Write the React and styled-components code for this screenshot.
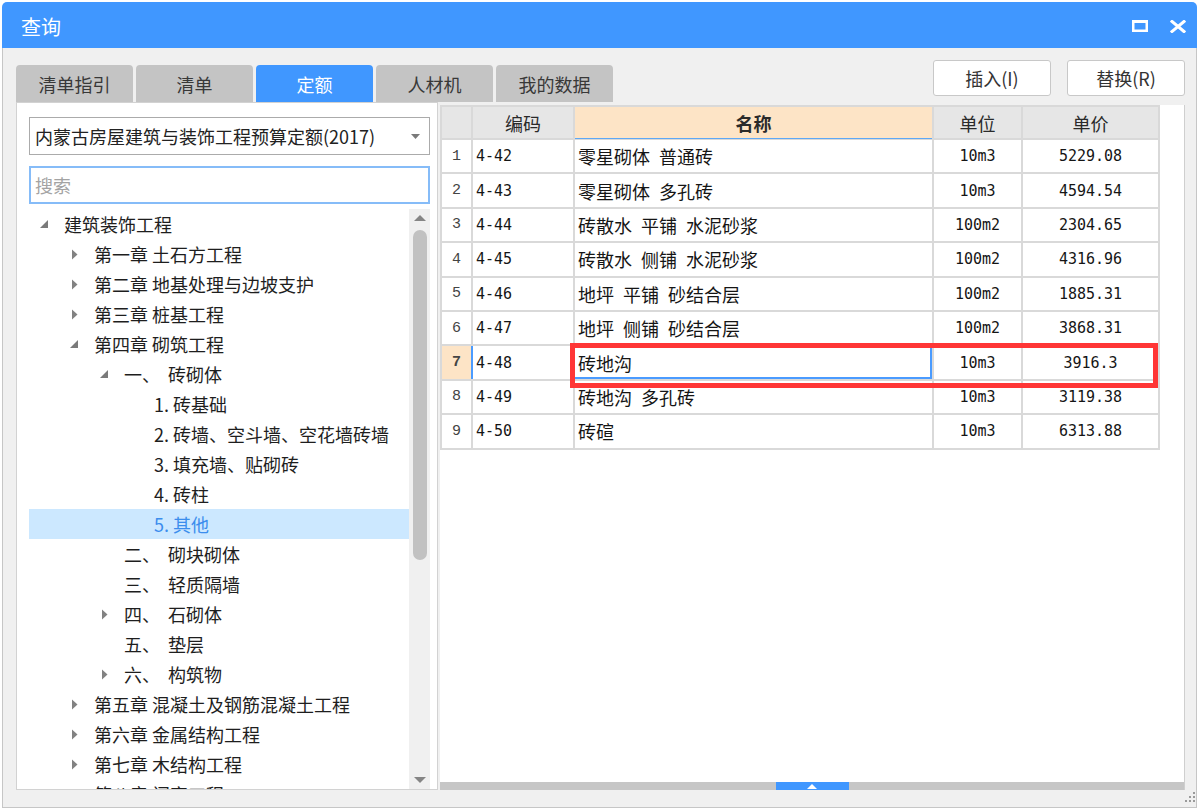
import React from 'react';
import styled, { createGlobalStyle } from 'styled-components';

const GlobalStyle = createGlobalStyle`
  html, body { margin: 0; padding: 0; background: #ffffff; }
  body { font-family: "Noto Sans CJK SC", "Noto Sans", sans-serif; }
  * { box-sizing: border-box; }
`;

const Window = styled.div`
  margin: 2px 0 0 2px;
  width: 1195px;
  height: 806px;
  display: flex;
  flex-direction: column;
  border-radius: 5px 5px 0 0;
  overflow: hidden;
  position: relative;
`;

const TitleBar = styled.div`
  height: 46px;
  flex: none;
  background: #4097ff;
  display: flex;
  align-items: center;
  justify-content: space-between;
  padding: 2px 11px 0 19px;
  color: #ffffff;
  font-size: 20px;
`;

const Controls = styled.div`
  display: flex;
  align-items: center;
  gap: 22px;
`;

const Body = styled.div`
  flex: 1;
  display: flex;
  flex-direction: column;
  background: #f0f0f0;
  border: 1px solid #c6c6c6;
  border-top: none;
  padding: 0 11px 0 13px;
  min-height: 0;
`;

const TopRow = styled.div`
  height: 54px;
  flex: none;
  display: flex;
  justify-content: space-between;
`;

const Tabs = styled.div`
  align-self: flex-end;
  display: flex;
  gap: 3px;
`;

const Tab = styled.div`
  width: 117px;
  height: 37px;
  border-radius: 4px 4px 0 0;
  background: ${p => (p.$active ? '#4097ff' : '#c4c4c4')};
  color: ${p => (p.$active ? '#ffffff' : '#383838')};
  font-size: 18px;
  display: flex;
  align-items: center;
  justify-content: center;
`;

const Buttons = styled.div`
  padding-top: 12px;
  display: flex;
  gap: 16px;
  align-items: flex-start;
`;

const Button = styled.div`
  width: 118px;
  height: 36px;
  background: #ffffff;
  border: 1px solid #c8c8c8;
  border-radius: 3px;
  font-size: 18px;
  color: #333333;
  display: flex;
  align-items: center;
  justify-content: center;
`;

const Main = styled.div`
  height: 688px;
  flex: none;
  display: flex;
  gap: 2px;
`;

const LeftPanel = styled.div`
  width: 422px;
  flex: none;
  background: #ffffff;
  border: 1px solid #d2d2d2;
  padding: 14px 7px 0 12px;
  display: flex;
  flex-direction: column;
  min-height: 0;
`;

const Select = styled.div`
  height: 38px;
  flex: none;
  border: 1px solid #ababab;
  display: flex;
  align-items: center;
  justify-content: space-between;
  padding: 0 9px 0 5px;
  font-size: 18px;
  color: #222222;
`;

const Search = styled.div`
  height: 38px;
  flex: none;
  margin-top: 11px;
  border: 2px solid #86bcf8;
  display: flex;
  align-items: center;
  padding-left: 4px;
  font-size: 18px;
  color: #a3a3a3;
`;

const TreeArea = styled.div`
  flex: 1;
  margin-top: 5px;
  display: flex;
  min-height: 0;
`;

const TreeList = styled.div`
  flex: 1;
  overflow: hidden;
`;

const TreeRow = styled.div`
  height: 30px;
  display: flex;
  align-items: center;
  padding-left: ${p => p.$level * 30}px;
  background: ${p => (p.$selected ? '#cce8ff' : 'transparent')};
  color: ${p => (p.$selected ? '#3b8ded' : '#1e1e1e')};
  font-size: 18px;
  white-space: pre;
`;

const Toggle = styled.span`
  width: 30px;
  margin-right: 5px;
  flex: none;
  display: flex;
  align-items: center;
  justify-content: center;
`;

const VScroll = styled.div`
  width: 21px;
  flex: none;
  background: #f0f0f0;
  display: flex;
  flex-direction: column;
  align-items: center;
  padding: 6px 0 6px;
`;

const Thumb = styled.div`
  width: 14px;
  height: 330px;
  margin-top: 9px;
  border-radius: 7px;
  background: #c1c1c1;
`;

const ScrollSpacer = styled.div`
  flex: 1;
`;

const RightPanel = styled.div`
  flex: 1;
  margin-top: 3px;
  background: #ffffff;
  border-right: 1px solid #cfcfcf;
  display: flex;
  flex-direction: column;
  position: relative;
  min-width: 0;
`;

const TableArea = styled.div`
  flex: 1;
  min-height: 0;
`;

const Grid = styled.div`
  display: grid;
  width: max-content;
  grid-template-columns: 29px 100px 357px 87px 135px;
  grid-template-rows: 31px;
  grid-auto-rows: 32.4px;
  gap: 2px;
  padding: 2px;
  background: #d9d9d9;
`;

const HeadCell = styled.div`
  background: ${p => (p.$active ? '#fde4c6' : '#e6e6e6')};
  font-weight: ${p => (p.$active ? 700 : 400)};
  box-shadow: ${p => (p.$active ? '0 1px 0 #5ea8f5' : 'none')};
  color: #2a2a2a;
  font-size: 18px;
  display: flex;
  align-items: center;
  justify-content: center;
`;

const NumCell = styled.div`
  background: ${p => (p.$active ? '#fde4c6' : '#ffffff')};
  font-weight: ${p => (p.$active ? 700 : 400)};
  color: #444444;
  font-family: "Liberation Mono", monospace;
  font-size: 15px;
  display: flex;
  align-items: center;
  justify-content: center;
`;

const Cell = styled.div`
  background: #ffffff;
  color: #151515;
  display: flex;
  align-items: center;
  justify-content: ${p => (p.$center ? 'center' : 'flex-start')};
  padding-left: ${p => (p.$center ? 0 : 3)}px;
  font-family: ${p => (p.$mono ? '"DejaVu Sans Mono", "Noto Sans CJK SC", monospace' : '"Noto Sans CJK SC", sans-serif')};
  font-size: ${p => (p.$mono ? 15 : 18)}px;
  word-spacing: 5px;
  white-space: pre;
  box-shadow: ${p => p.$shadow || 'none'};
`;

const Highlight = styled.div`
  position: absolute;
  left: 130px;
  top: 238px;
  width: 588px;
  height: 45px;
  border: 5px solid #ff3636;
  pointer-events: none;
`;

const HBar = styled.div`
  height: 8px;
  flex: none;
  background: #c6c6c6;
  display: flex;
  justify-content: center;
`;

const Handle = styled.div`
  width: 73px;
  height: 8px;
  background: #4097ff;
  display: flex;
  align-items: center;
  justify-content: center;
`;

const Footer = styled.div`
  flex: 1;
  display: flex;
  justify-content: flex-end;
  align-items: flex-end;
  margin-right: -10px;
  padding-bottom: 3px;
`;

const ExpandedIcon = () => (
  <svg width="10" height="10" viewBox="0 0 10 10">
    <polygon points="9,1 9,9 1,9" fill="#7a7a7a" />
  </svg>
);

const CollapsedIcon = () => (
  <svg width="7" height="11" viewBox="0 0 7 11">
    <polygon points="1,0.5 6.5,5.5 1,10.5" fill="#828282" />
  </svg>
);

const tree = [
  { level: 0, state: 'open', label: '建筑装饰工程' },
  { level: 1, state: 'closed', label: '第一章 土石方工程' },
  { level: 1, state: 'closed', label: '第二章 地基处理与边坡支护' },
  { level: 1, state: 'closed', label: '第三章 桩基工程' },
  { level: 1, state: 'open', label: '第四章 砌筑工程' },
  { level: 2, state: 'open', label: '一、  砖砌体' },
  { level: 3, label: '1. 砖基础' },
  { level: 3, label: '2. 砖墙、空斗墙、空花墙砖墙' },
  { level: 3, label: '3. 填充墙、贴砌砖' },
  { level: 3, label: '4. 砖柱' },
  { level: 3, label: '5. 其他', selected: true },
  { level: 2, label: '二、  砌块砌体' },
  { level: 2, label: '三、  轻质隔墙' },
  { level: 2, state: 'closed', label: '四、  石砌体' },
  { level: 2, label: '五、  垫层' },
  { level: 2, state: 'closed', label: '六、  构筑物' },
  { level: 1, state: 'closed', label: '第五章 混凝土及钢筋混凝土工程' },
  { level: 1, state: 'closed', label: '第六章 金属结构工程' },
  { level: 1, state: 'closed', label: '第七章 木结构工程' },
  { level: 1, state: 'closed', label: '第八章 门窗工程' },
];

const rows = [
  ['4-42', '零星砌体 普通砖', '10m3', '5229.08'],
  ['4-43', '零星砌体 多孔砖', '10m3', '4594.54'],
  ['4-44', '砖散水 平铺 水泥砂浆', '100m2', '2304.65'],
  ['4-45', '砖散水 侧铺 水泥砂浆', '100m2', '4316.96'],
  ['4-46', '地坪 平铺 砂结合层', '100m2', '1885.31'],
  ['4-47', '地坪 侧铺 砂结合层', '100m2', '3868.31'],
  ['4-48', '砖地沟', '10m3', '3916.3'],
  ['4-49', '砖地沟 多孔砖', '10m3', '3119.38'],
  ['4-50', '砖碹', '10m3', '6313.88'],
];

const tabs = ['清单指引', '清单', '定额', '人材机', '我的数据'];

export default function App() {
  return (
    <>
      <GlobalStyle />
      <Window>
        <TitleBar>
          <span>查询</span>
          <Controls>
            <svg width="16" height="12" viewBox="0 0 16 12">
              <rect x="1.25" y="1.5" width="13.5" height="9.25" fill="none" stroke="#fff" strokeWidth="2.5" />
              <rect x="0" y="0" width="16" height="3" fill="#fff" />
            </svg>
            <svg width="16" height="13" viewBox="0 0 16 13">
              <path d="M2 1.5 L14 11.5 M14 1.5 L2 11.5" stroke="#fff" strokeWidth="3" strokeLinecap="square" />
            </svg>
          </Controls>
        </TitleBar>
        <Body>
          <TopRow>
            <Tabs>
              {tabs.map(t => (
                <Tab key={t} $active={t === '定额'}>{t}</Tab>
              ))}
            </Tabs>
            <Buttons>
              <Button>插入(I)</Button>
              <Button>替换(R)</Button>
            </Buttons>
          </TopRow>
          <Main>
            <LeftPanel>
              <Select>
                <span>内蒙古房屋建筑与装饰工程预算定额(2017)</span>
                <svg width="9" height="5" viewBox="0 0 9 5">
                  <polygon points="0,0 9,0 4.5,5" fill="#7a7a7a" />
                </svg>
              </Select>
              <Search>搜索</Search>
              <TreeArea>
                <TreeList>
                  {tree.map((n, i) => (
                    <TreeRow key={i} $level={n.level} $selected={n.selected}>
                      <Toggle>
                        {n.state === 'open' && <ExpandedIcon />}
                        {n.state === 'closed' && <CollapsedIcon />}
                      </Toggle>
                      {n.label}
                    </TreeRow>
                  ))}
                </TreeList>
                <VScroll>
                  <svg width="12" height="6" viewBox="0 0 12 6">
                    <polygon points="0,6 6,0 12,6" fill="#858585" />
                  </svg>
                  <Thumb />
                  <ScrollSpacer />
                  <svg width="12" height="6" viewBox="0 0 12 6">
                    <polygon points="0,0 12,0 6,6" fill="#858585" />
                  </svg>
                </VScroll>
              </TreeArea>
            </LeftPanel>
            <RightPanel>
              <TableArea>
                <Grid>
                  <HeadCell />
                  <HeadCell>编码</HeadCell>
                  <HeadCell $active>名称</HeadCell>
                  <HeadCell>单位</HeadCell>
                  <HeadCell>单价</HeadCell>
                  {rows.map((r, i) => {
                    const sel = i === 6;
                    return (
                      <React.Fragment key={r[0]}>
                        <NumCell $active={sel}>{i + 1}</NumCell>
                        <Cell $mono $shadow={sel ? '-2px 0 0 #4a9bff' : undefined}>{r[0]}</Cell>
                        <Cell $shadow={sel ? 'inset -2px -2px 0 #4a9bff' : undefined}>{r[1]}</Cell>
                        <Cell $mono $center>{r[2]}</Cell>
                        <Cell $mono $center>{r[3]}</Cell>
                      </React.Fragment>
                    );
                  })}
                </Grid>
              </TableArea>
              <HBar>
                <Handle>
                  <svg width="10" height="5" viewBox="0 0 10 5">
                    <polygon points="0,5 5,0 10,5" fill="#ffffff" />
                  </svg>
                </Handle>
              </HBar>
              <Highlight />
            </RightPanel>
          </Main>
          <Footer>
            <svg width="12" height="12" viewBox="0 0 12 12">
              <rect x="10" y="0" width="2" height="2" fill="#9a9a9a" />
              <rect x="6" y="4" width="2" height="2" fill="#9a9a9a" />
              <rect x="10" y="4" width="2" height="2" fill="#9a9a9a" />
              <rect x="2" y="8" width="2" height="2" fill="#9a9a9a" />
              <rect x="6" y="8" width="2" height="2" fill="#9a9a9a" />
              <rect x="10" y="8" width="2" height="2" fill="#9a9a9a" />
            </svg>
          </Footer>
        </Body>
      </Window>
    </>
  );
}
